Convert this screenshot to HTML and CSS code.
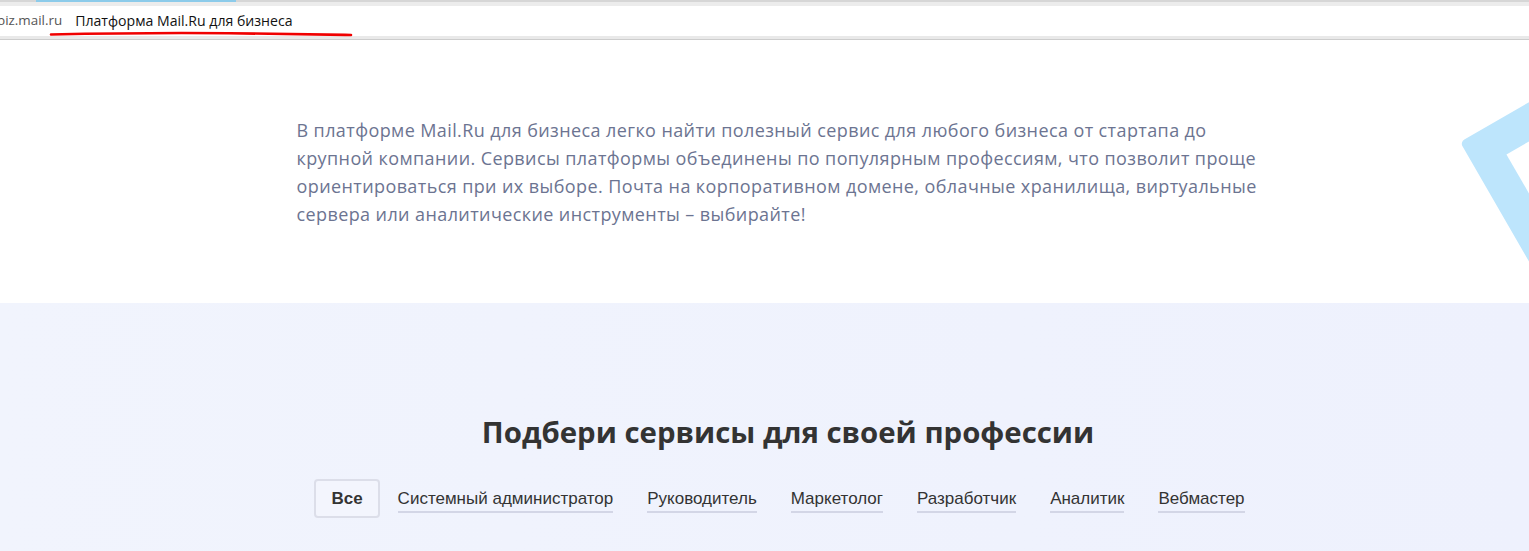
FILE: index.html
```html
<!DOCTYPE html>
<html lang="ru">
<head>
<meta charset="utf-8">
<title>Платформа Mail.Ru для бизнеса</title>
<link rel="stylesheet" href="styles.css">
</head>
<body>
<header class="browser">
  <div class="browser-top"><span class="browser-tab-line"></span></div>
  <div class="browser-bar">
    <span class="browser-host">biz.mail.ru</span>
    <span class="browser-title">Платформа Mail.Ru для бизнеса</span>
    <svg class="red-mark" width="310" height="10" viewBox="0 0 310 10">
      <path d="M2 4.5 C 60 3.2, 120 2.6, 180 3.2 S 270 4.2, 302 5" fill="none" stroke="#f00000" stroke-width="2.6" stroke-linecap="round"/>
    </svg>
  </div>
</header>
<section class="hero">
  <svg class="hero-deco" width="100" height="263" viewBox="0 0 100 263">
    <g transform="translate(31 102) rotate(-30)">
      <rect x="0" y="0" width="420" height="420" rx="5" fill="#bde5fc"/>
      <rect x="34" y="34" width="352" height="352" fill="#ffffff"/>
    </g>
  </svg>
  <div class="container">
    <p class="hero-text">В платформе Mail.Ru для бизнеса легко найти полезный сервис для любого бизнеса от стартапа до крупной компании. Сервисы платформы объединены по популярным профессиям, что позволит проще ориентироваться при их выборе. Почта на корпоративном домене, облачные хранилища, виртуальные сервера или аналитические инструменты – выбирайте!</p>
  </div>
</section>
<section class="pick">
  <div class="container">
    <h2 class="pick-title">Подбери сервисы для своей профессии</h2>
    <nav class="tabs">
      <span class="tab tab-active">Все</span>
      <a class="tab" href="#">Системный администратор</a>
      <a class="tab" href="#">Руководитель</a>
      <a class="tab" href="#">Маркетолог</a>
      <a class="tab" href="#">Разработчик</a>
      <a class="tab" href="#">Аналитик</a>
      <a class="tab" href="#">Вебмастер</a>
    </nav>
  </div>
</section>
</body>
</html>
```
FILE: styles.css
```css
* { box-sizing: border-box; }
html, body { margin: 0; padding: 0; }
body {
  background: #eff2fd;
  overflow: hidden;
  font-family: "Liberation Sans", Arial, sans-serif;
}

.browser-top {
  height: 6px;
  background: #ececec;
  border-top: 2px solid #d6d6d6;
  position: relative;
}
.browser-tab-line {
  display: block;
  margin: -2px 0 0 36px;
  width: 200px;
  height: 2px;
  background: #8ccbea;
}
.browser-bar {
  height: 33px;
  background: #ffffff;
  border-bottom: 3px solid #e9e9e9;
  box-shadow: 0 1px 0 #cdcdcd;
  display: flex;
  align-items: center;
  gap: 13px;
  margin-left: -3px;
  padding-bottom: 2px;
  position: relative;
  font-family: "Open Sans", "Noto Sans", sans-serif;
  font-size: 13.4px;
}
.browser-host { color: #555555; }
.browser-title { color: #111111; font-size: 14.1px; }
.red-mark {
  position: absolute;
  left: 52px;
  top: 24px;
}

.hero {
  position: relative;
  background: #ffffff;
  height: 263px;
  margin-top: 1px;
  overflow: hidden;
  padding-top: 76px;
}
.hero-deco {
  position: absolute;
  right: 0;
  top: 0;
}
.container {
  width: 985px;
  margin-left: calc(50% - 468px);
}
.hero-text {
  margin: 0;
  font-family: "Open Sans", "Noto Sans", sans-serif;
  font-size: 18px;
  letter-spacing: 0.4px;
  line-height: 28px;
  color: #6c7491;
}

.pick {
  background: linear-gradient(90deg, #f1f4fd 0%, #eef1fd 100%);
  padding-top: 109px;
  height: 260px;
}
.pick-title {
  margin: 0;
  padding-left: 19px;
  padding-right: 21px;
  text-align: center;
  font-family: "Open Sans", "Noto Sans", sans-serif;
  font-weight: 700;
  font-size: 29.4px;
  line-height: 40px;
  color: #333333;
}
.tabs {
  margin-top: 27px;
  display: flex;
  justify-content: center;
  align-items: center;
  gap: 34px;
  padding-right: 19px;
}
.tab {
  font-size: 17px;
  color: #333333;
  text-decoration: none;
  line-height: 22px;
  border-bottom: 2px solid #d3d6e6;
  padding-bottom: 1px;
  margin-top: 4px;
}
.tab-active {
  margin: 0 -16px 0 0;
  border: 2px solid #dcdee9;
  border-radius: 4px;
  background: #f3f5fd;
  font-weight: 700;
  padding: 7px 15px 6px;
}
```
